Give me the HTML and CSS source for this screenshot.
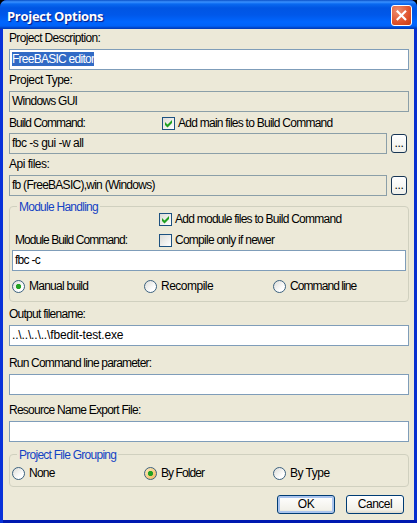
FILE: index.html
```html
<!DOCTYPE html>
<html lang="en">
<head>
<meta charset="utf-8">
<title>Project Options</title>
<link rel="stylesheet" href="styles.css">
</head>
<body>
<main class="window">
  <header class="titlebar">
    <h1>Project Options</h1>
    <button class="close" aria-label="Close"><svg width="21" height="21" viewBox="0 0 21 21"><path d="M5.8 5.8 15 15M15 5.8 5.8 15" stroke="#fff" stroke-width="2.2"/></svg></button>
  </header>
  <section class="content">
    <div class="label-row first"><span class="description">Project Description:</span></div>
    <div class="field"><span class="selected">FreeBASIC editor</span></div>
    <div class="label-row"><span class="loose">Project Type:</span></div>
    <div class="field readonly"><span>Windows GUI</span></div>
    <div class="label-row with-check"><span class="tight">Build Command:</span>
      <label class="option"><i class="check"><svg width="13" height="13"><path d="M3 5v3l2.5 2.5L10 6V3L5.5 7.5z" fill="#21a121"/></svg></i><span>Add main files to Build Command</span></label>
    </div>
    <div class="browse-row"><div class="field readonly"><span class="loose">fbc -s gui -w all</span></div><button class="browse">...</button></div>
    <div class="label-row"><span class="loose">Api files:</span></div>
    <div class="browse-row"><div class="field readonly"><span>fb (FreeBASIC),win (Windows)</span></div><button class="browse">...</button></div>

    <section class="group module">
      <h2>Module Handling</h2>
      <div class="module-grid">
        <span></span>
        <label class="option"><i class="check"><svg width="13" height="13"><path d="M3 5v3l2.5 2.5L10 6V3L5.5 7.5z" fill="#21a121"/></svg></i><span>Add module files to Build Command</span></label>
        <span class="command-label tight">Module Build Command:</span>
        <label class="option"><i class="check"></i><span>Compile only if newer</span></label>
      </div>
      <div class="field"><span>fbc -c</span></div>
      <div class="radios">
        <label class="option"><i class="radio on"></i><span>Manual build</span></label>
        <label class="option"><i class="radio"></i><span class="loose">Recompile</span></label>
        <label class="option"><i class="radio"></i><span class="tight">Command line</span></label>
      </div>
    </section>

    <div class="label-row output"><span>Output filename:</span></div>
    <div class="field"><span class="path">..\..\..\..\fbedit-test.exe</span></div>
    <div class="label-row run"><span class="snug">Run Command line parameter:</span></div>
    <div class="field"></div>
    <div class="label-row resource"><span>Resource Name Export File:</span></div>
    <div class="field"></div>

    <section class="group grouping">
      <h2>Project File Grouping</h2>
      <div class="radios">
        <label class="option"><i class="radio"></i><span>None</span></label>
        <label class="option"><i class="radio on hot"></i><span class="tight">By Folder</span></label>
        <label class="option"><i class="radio"></i><span class="loose">By Type</span></label>
      </div>
    </section>
    <footer><button class="push default">OK</button><button class="push">Cancel</button></footer>
  </section>
</main>
</body>
</html>
```
FILE: styles.css
```css
* { box-sizing: border-box; }
body {
  margin: 0;
  background: #000;
  font: 12px/22px "Liberation Sans", sans-serif;
  letter-spacing: -0.74px;
  color: #000;
  white-space: nowrap;
}
.description { letter-spacing: -0.64px; }
.loose { letter-spacing: -0.5px; }
.snug { letter-spacing: -0.81px; }
.tight { letter-spacing: -0.92px; }
.path { letter-spacing: -0.15px; }
button { padding: 0; font: inherit; letter-spacing: inherit; color: inherit; }
svg { display: block; }
.window {
  width: 417px;
  height: 523px;
  overflow: hidden;
  border-radius: 7px 7px 0 0;
  background: #0831d9;
}
.titlebar {
  height: 29px;
  display: flex;
  justify-content: space-between;
  align-items: flex-start;
  padding: 5px 5px 0 7px;
  background: linear-gradient(#0a50c8 0, #3a91ff 2px, #0969f0 4px, #0055e3 8px, #0058ea 15px, #0066ff 22px, #0062f8 26px, #0042c4 28px, #003ab8 29px);
}
.titlebar h1 {
  margin: 0;
  font: bold 13px/22px "Open Sans", "Noto Sans", sans-serif;
  letter-spacing: -0.3px;
  color: #fff;
  text-shadow: 1px 1px 1px #0a1883;
}
.close {
  width: 21px;
  height: 21px;
  border: 1px solid #fff;
  border-radius: 3px;
  background: radial-gradient(circle at 30% 25%, #ed8e70, #e0532c 60%, #c83c12);
}
.close svg { margin: -1px; }
.content {
  height: 491px;
  padding: 0 5px 0 6px;
  margin-left: 3px;
  border-right: 3px solid #0830d0;
  background: #ece9d8;
  box-shadow: 0 3px #0019b0;
}
.label-row {
  height: 21px;
  display: flex;
  align-items: flex-end;
}
.first { height: 20px; }
.output { height: 22px; margin-top: 1px; }
.run { height: 28px; }
.resource { height: 26px; }
.with-check { display: grid; grid-template-columns: 153px 1fr; }
.field {
  height: 21px;
  border: 1px solid #7f9db9;
  background: #fff;
  padding: 0 2px;
  line-height: 19px;
}
.readonly { background: #ece9d8; border-color: #8b9fa8; }
.selected { display: inline-block; height: 14px; line-height: 14px; background: #316ac5; color: #fff; }
.browse-row { display: grid; grid-template-columns: 378px 16px; gap: 4px; align-items: center; }
.browse {
  height: 19px;
  border: 1px solid #173554;
  border-radius: 3px;
  background: linear-gradient(#fff, #f0f0ea);
  line-height: 17px;
  letter-spacing: -0.4px;
}
.option { display: flex; align-items: center; gap: 3px; }
.check { width: 13px; height: 13px; flex: none; border: 1px solid #1c5180; background: linear-gradient(135deg, #dcdcd7, #fff); }
.check svg { margin: -1px; }
.radio { width: 13px; height: 13px; flex: none; border: 1px solid #3b617f; border-radius: 50%; background: linear-gradient(135deg, #dcdcd7, #fff 70%); }
.radio.on { background: radial-gradient(circle, #21a121 0 2.2px, transparent 3px), linear-gradient(135deg, #dcdcd7, #fff 70%); }
.radio.hot { background: radial-gradient(circle, #21a121 0 2.2px, transparent 3px), linear-gradient(135deg, #fbe9c0, #f0b95a); }
.group { border: 1px solid #d0d0bf; border-radius: 4px; width: 400px; padding: 0 2px; }
.group h2 {
  width: max-content;
  height: 14px;
  margin: -8px 0 0 5px;
  padding: 0 2px;
  font: inherit;
  line-height: 16px;
  background: #ece9d8;
  color: #1443c4;
}
.module { height: 96px; margin-top: 10px; }
.module-grid { display: grid; grid-template-columns: 147px 1fr; grid-template-rows: 12px 30px; line-height: 20px; align-items: center; height: 37px; }
.command-label { padding-left: 3px; }
.module .field { width: 394px; }
.radios { display: grid; grid-template-columns: 132px 129px 1fr; }
.radios .option { gap: 4px; }
.module .radios { margin-top: 4px; }
.grouping { height: 33px; margin-top: 12px; }
.grouping .radios { margin-top: 1px; }
footer { display: flex; justify-content: flex-end; gap: 11px; margin-top: 8px; padding-right: 5px; }
.push {
  width: 58px;
  height: 19px;
  border: 1px solid #003c74;
  border-radius: 3px;
  background: linear-gradient(#fff, #f2f1ea 80%, #dcd8cc);
  line-height: 17px;
  letter-spacing: -0.5px;
}
.default { box-shadow: inset 0 0 0 2px #aac4ee; }
```
